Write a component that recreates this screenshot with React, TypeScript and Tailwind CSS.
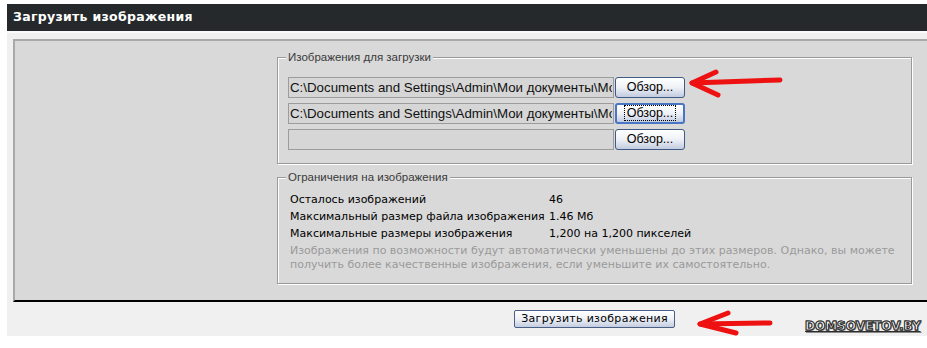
import React from "react";

const path = "C:\\Documents and Settings\\Admin\\Мои документы\\Мои рисунки\\photo.jpg";

function BrowseButton({ focused }: { focused?: boolean }) {
  return (
    <button
      type="button"
      className={
        "w-[70px] h-[21px] rounded-[3px] bg-gradient-to-b from-[#ffffff] via-[#eef1f6] to-[#c2cce0] flex items-center justify-center font-['Liberation_Sans',sans-serif] text-[12.5px] text-black " +
        (focused ? "border-2 border-[#4a74c4]" : "border border-[#3f5a84]")
      }
    >
      {focused ? (
        <span className="border border-dotted border-black px-[2px] leading-[14px]">Обзор...</span>
      ) : (
        <span className="leading-[14px]">Обзор...</span>
      )}
    </button>
  );
}

function FileRow({ value, focused }: { value: string; focused?: boolean }) {
  return (
    <div className="flex items-center gap-[1px] h-[22px]">
      <input
        readOnly
        value={value}
        className="w-[326px] h-[21px] border border-[#9c9c9c] bg-[#d6d6d6] px-[1px] font-['Liberation_Sans',sans-serif] text-[13.3px] text-[#111] outline-none"
      />
      <BrowseButton focused={focused} />
    </div>
  );
}

function Group({ title, children, className }: { title: string; children: React.ReactNode; className: string }) {
  return (
    <div
      className={
        "relative h-[107px] border border-[#9a9a9a] shadow-[inset_1px_1px_0_#ffffff,1px_1px_0_#ffffff] " + className
      }
    >
      <span className="absolute left-[8px] -top-[7px] px-[2px] bg-[#d9d9d9] font-['Liberation_Sans',sans-serif] text-[11.5px] leading-[13px] text-[#3a3a3a]">
        {title}
      </span>
      {children}
    </div>
  );
}

export default function App() {
  return (
    <div className="relative w-[927px] h-[348px] bg-white font-['DejaVu_Sans',sans-serif] overflow-hidden">
      <div className="pl-[7px] pt-[4px]">
        <div className="h-[27px] bg-[#25292b] flex items-center pl-[6px] text-white font-bold text-[12.5px] tracking-[0.3px]">
          Загрузить изображения
        </div>
        <div className="bg-[#f0f0f0]">
          <div className="border-t-2 border-[#fafafa] pt-[6px] pl-[6px]">
            <div className="bg-[#d9d9d9] border-t-2 border-l-2 border-[#a9a9a9] border-b-2 border-b-black pt-[16px] pb-[16px] pl-[262px] pr-[15px]">
              <Group title="Изображения для загрузки" className="pt-[18px] pl-[10px]">
                <div className="flex flex-col gap-[4px]">
                  <FileRow value={path} />
                  <FileRow value={path} focused />
                  <FileRow value="" />
                </div>
              </Group>
              <Group title="Ограничения на изображения" className="mt-[13px] pt-[13px] pl-[12px] text-[11px]">
                <div className="grid grid-cols-[259px_1fr] leading-[17px] text-black">
                  <div>Осталось изображений</div>
                  <div>46</div>
                  <div>Максимальный размер файла изображения</div>
                  <div>1.46 Мб</div>
                  <div>Максимальные размеры изображения</div>
                  <div>1,200 на 1,200 пикселей</div>
                </div>
                <p className="mt-[2px] leading-[14px] text-[#9a9a9a] whitespace-nowrap">
                  Изображения по возможности будут автоматически уменьшены до этих размеров. Однако, вы можете
                  <br />
                  получить более качественные изображения, если уменьшите их самостоятельно.
                </p>
              </Group>
            </div>
          </div>
          <div className="pt-[8px] pb-[8px] pl-[270px] pr-[15px] flex justify-center">
            <button
              type="button"
              className="w-[161px] h-[18px] rounded-[2px] border border-[#4a5f85] bg-gradient-to-b from-[#ffffff] via-[#eef1f6] to-[#c4cde0] text-[11px] leading-[14px] text-black tracking-[0.3px]"
            >
              Загрузить изображения
            </button>
          </div>
        </div>
      </div>

      <div className="absolute left-[805px] top-[319px] font-bold text-[12px] leading-[15px] text-white underline [-webkit-text-stroke:1px_#2e2e2e] [text-shadow:1px_1px_0_#888]">
        DOMSOVETOV.BY
      </div>

      <svg className="absolute inset-0 pointer-events-none" width="927" height="348" viewBox="0 0 927 348">
        <g stroke="#ee1111" strokeWidth="5" strokeLinecap="round" strokeLinejoin="round" fill="none">
          <path d="M780 80 L692 83" />
          <path d="M716 72 L692 83 L718 95" />
          <path d="M770 323 L700 324" />
          <path d="M728 313 L700 324 L736 333" />
        </g>
      </svg>
    </div>
  );
}
